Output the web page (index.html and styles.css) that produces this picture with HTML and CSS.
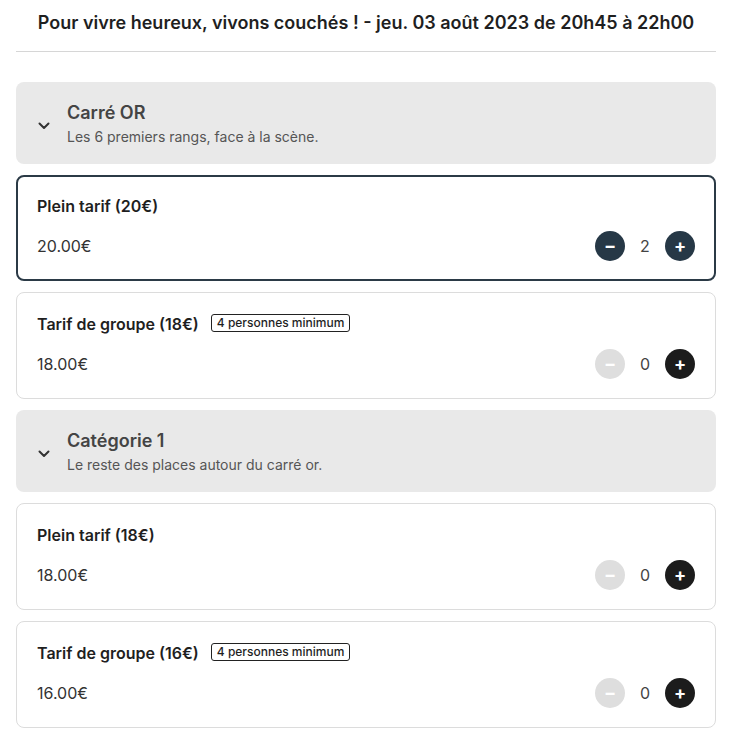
FILE: index.html
```html
<!DOCTYPE html>
<html>
	<head>
		<meta charset="UTF-8">
		<title>Billetterie</title>
		<link rel="stylesheet" href="styles.css">
	</head>
	<body>
		<div class="page">
			<h1 class="event-title">Pour vivre heureux, vivons couchés ! - jeu. 03 août 2023 de 20h45 à 22h00</h1>

			<div class="list">
				<div class="category">
					<svg class="chevron" width="12" height="8" viewBox="0 0 12 8"><path d="M1.5 1.5 L6 6 L10.5 1.5" fill="none" stroke="#333" stroke-width="2" stroke-linecap="round" stroke-linejoin="round"/></svg>
					<div>
						<p class="cat-name">Carré OR</p>
						<p class="cat-desc">Les 6 premiers rangs, face à la scène.</p>
					</div>
				</div>

				<div class="rate active">
					<div class="rate-head">
						<p class="rate-name">Plein tarif (20€)</p>
					</div>
					<div class="rate-row">
						<span class="price">20.00€</span>
						<div class="qty">
							<button class="btn minus">&minus;</button>
							<span class="count">2</span>
							<button class="btn plus">+</button>
						</div>
					</div>
				</div>

				<div class="rate">
					<div class="rate-head">
						<p class="rate-name">Tarif de groupe (18€)</p>
						<span class="badge">4 personnes minimum</span>
					</div>
					<div class="rate-row">
						<span class="price">18.00€</span>
						<div class="qty">
							<button class="btn minus off">&minus;</button>
							<span class="count">0</span>
							<button class="btn plus">+</button>
						</div>
					</div>
				</div>

				<div class="category">
					<svg class="chevron" width="12" height="8" viewBox="0 0 12 8"><path d="M1.5 1.5 L6 6 L10.5 1.5" fill="none" stroke="#333" stroke-width="2" stroke-linecap="round" stroke-linejoin="round"/></svg>
					<div>
						<p class="cat-name">Catégorie 1</p>
						<p class="cat-desc">Le reste des places autour du carré or.</p>
					</div>
				</div>

				<div class="rate">
					<div class="rate-head">
						<p class="rate-name">Plein tarif (18€)</p>
					</div>
					<div class="rate-row">
						<span class="price">18.00€</span>
						<div class="qty">
							<button class="btn minus off">&minus;</button>
							<span class="count">0</span>
							<button class="btn plus">+</button>
						</div>
					</div>
				</div>

				<div class="rate">
					<div class="rate-head">
						<p class="rate-name">Tarif de groupe (16€)</p>
						<span class="badge">4 personnes minimum</span>
					</div>
					<div class="rate-row">
						<span class="price">16.00€</span>
						<div class="qty">
							<button class="btn minus off">&minus;</button>
							<span class="count">0</span>
							<button class="btn plus">+</button>
						</div>
					</div>
				</div>
			</div>
		</div>
	</body>
</html>
```

FILE: styles.css
```css
* {
	margin: 0;
	padding: 0;
	box-sizing: border-box;
}

body {
	font-family: Inter, "Liberation Sans", sans-serif;
	color: #1f1f1f;
	background-color: #fff;
}

.page {
	padding: 0 21px 0 16px;
}

.event-title {
	font-size: 18px;
	font-weight: 600;
	line-height: 22px;
	text-align: center;
	padding: 12px 0 17px;
	border-bottom: 1px solid #d6d6d6;
	margin-bottom: 30px;
}

.list {
	display: flex;
	flex-direction: column;
	gap: 11px;
}

.category {
	display: flex;
	align-items: center;
	gap: 17px;
	background-color: #e9e9e9;
	border-radius: 8px;
	padding: 19px 20px 18px 22px;
	height: 82px;
}

.chevron {
	margin-top: 4px;
}

.cat-name {
	font-size: 18px;
	font-weight: 600;
	line-height: 22px;
	color: #444;
}

.cat-desc {
	font-size: 14px;
	line-height: 18px;
	color: #555;
	margin-top: 4px;
}

.rate {
	border: 1px solid #dcdcdc;
	border-radius: 8px;
	padding: 20px 20px 19px;
}

.rate.active {
	border: 2px solid #2b3a46;
	padding: 18px 19px 18px;
}

.rate-head {
	display: flex;
	align-items: center;
	gap: 12px;
	height: 22px;
}

.rate-name {
	font-size: 16px;
	font-weight: 600;
	line-height: 22px;
}

.badge {
	font-size: 12px;
	font-weight: 500;
	line-height: 16px;
	border: 1px solid #222;
	border-radius: 3px;
	padding: 0 5px;
	margin-top: -2px;
}

.rate-row {
	display: flex;
	align-items: center;
	justify-content: space-between;
	margin-top: 14px;
}

.price {
	font-size: 16px;
	color: #333;
}

.qty {
	display: flex;
	align-items: center;
}

.btn {
	width: 30px;
	height: 30px;
	border: none;
	border-radius: 50%;
	background-color: #1c1c1c;
	color: #fff;
	font-family: Inter, "Liberation Sans", sans-serif;
	font-size: 18px;
	font-weight: 700;
	line-height: 30px;
	text-align: center;
}

.active .btn {
	background-color: #263846;
}

.btn.off {
	background-color: #dedede;
}

.count {
	width: 40px;
	text-align: center;
	font-size: 16px;
	color: #444;
}
```
